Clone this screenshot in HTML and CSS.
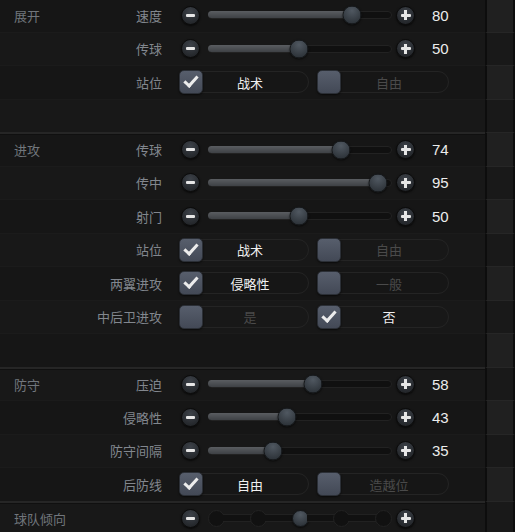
FILE: index.html
```html
<!doctype html>
<html lang="zh">
  <head>
    <meta charset="UTF-8" />
    <title>战术设置</title>
    <link rel="stylesheet" href="styles.css">
  </head>
  <body>
    <div class="panel">
      <!-- 展开 -->
      <div class="row">
        <div class="main">
          <div class="lab"><span class="sec">展开</span><span class="sub">速度</span></div>
          <span class="btn minus"></span>
          <div class="track"><div class="fill" style="width:142.8px"></div><div class="thumb" style="left:142.8px"></div></div>
          <span class="btn plus"></span>
          <span class="val">80</span>
        </div>
        <div class="side"></div>
      </div>
      <div class="row">
        <div class="main">
          <div class="lab"><span class="sub">传球</span></div>
          <span class="btn minus"></span>
          <div class="track"><div class="fill" style="width:90px"></div><div class="thumb" style="left:90px"></div></div>
          <span class="btn plus"></span>
          <span class="val">50</span>
        </div>
        <div class="side"></div>
      </div>
      <div class="row">
        <div class="main">
          <div class="lab"><span class="sub">站位</span></div>
          <div class="opts">
            <div class="opt on"><span class="box"></span><span class="pill">战术</span></div>
            <div class="opt"><span class="box"></span><span class="pill">自由</span></div>
          </div>
        </div>
        <div class="side"></div>
      </div>
      <div class="row">
        <div class="main"></div>
        <div class="side"></div>
      </div>

      <!-- 进攻 -->
      <div class="row first">
        <div class="main">
          <div class="lab"><span class="sec">进攻</span><span class="sub">传球</span></div>
          <span class="btn minus"></span>
          <div class="track"><div class="fill" style="width:132.2px"></div><div class="thumb" style="left:132.2px"></div></div>
          <span class="btn plus"></span>
          <span class="val">74</span>
        </div>
        <div class="side"></div>
      </div>
      <div class="row">
        <div class="main">
          <div class="lab"><span class="sub">传中</span></div>
          <span class="btn minus"></span>
          <div class="track"><div class="fill" style="width:169.2px"></div><div class="thumb" style="left:169.2px"></div></div>
          <span class="btn plus"></span>
          <span class="val">95</span>
        </div>
        <div class="side"></div>
      </div>
      <div class="row">
        <div class="main">
          <div class="lab"><span class="sub">射门</span></div>
          <span class="btn minus"></span>
          <div class="track"><div class="fill" style="width:90px"></div><div class="thumb" style="left:90px"></div></div>
          <span class="btn plus"></span>
          <span class="val">50</span>
        </div>
        <div class="side"></div>
      </div>
      <div class="row">
        <div class="main">
          <div class="lab"><span class="sub">站位</span></div>
          <div class="opts">
            <div class="opt on"><span class="box"></span><span class="pill">战术</span></div>
            <div class="opt"><span class="box"></span><span class="pill">自由</span></div>
          </div>
        </div>
        <div class="side"></div>
      </div>
      <div class="row">
        <div class="main">
          <div class="lab"><span class="sub">两翼进攻</span></div>
          <div class="opts">
            <div class="opt on"><span class="box"></span><span class="pill">侵略性</span></div>
            <div class="opt"><span class="box"></span><span class="pill">一般</span></div>
          </div>
        </div>
        <div class="side"></div>
      </div>
      <div class="row">
        <div class="main">
          <div class="lab"><span class="sub">中后卫进攻</span></div>
          <div class="opts">
            <div class="opt"><span class="box"></span><span class="pill">是</span></div>
            <div class="opt on"><span class="box"></span><span class="pill">否</span></div>
          </div>
        </div>
        <div class="side"></div>
      </div>
      <div class="row">
        <div class="main"></div>
        <div class="side"></div>
      </div>

      <!-- 防守 -->
      <div class="row first">
        <div class="main">
          <div class="lab"><span class="sec">防守</span><span class="sub">压迫</span></div>
          <span class="btn minus"></span>
          <div class="track"><div class="fill" style="width:104.1px"></div><div class="thumb" style="left:104.1px"></div></div>
          <span class="btn plus"></span>
          <span class="val">58</span>
        </div>
        <div class="side"></div>
      </div>
      <div class="row">
        <div class="main">
          <div class="lab"><span class="sub">侵略性</span></div>
          <span class="btn minus"></span>
          <div class="track"><div class="fill" style="width:77.7px"></div><div class="thumb" style="left:77.7px"></div></div>
          <span class="btn plus"></span>
          <span class="val">43</span>
        </div>
        <div class="side"></div>
      </div>
      <div class="row">
        <div class="main">
          <div class="lab"><span class="sub">防守间隔</span></div>
          <span class="btn minus"></span>
          <div class="track"><div class="fill" style="width:63.6px"></div><div class="thumb" style="left:63.6px"></div></div>
          <span class="btn plus"></span>
          <span class="val">35</span>
        </div>
        <div class="side"></div>
      </div>
      <div class="row">
        <div class="main">
          <div class="lab"><span class="sub">后防线</span></div>
          <div class="opts">
            <div class="opt on"><span class="box"></span><span class="pill">自由</span></div>
            <div class="opt"><span class="box"></span><span class="pill">造越位</span></div>
          </div>
        </div>
        <div class="side"></div>
      </div>

      <!-- 球队倾向 -->
      <div class="row first">
        <div class="main">
          <div class="lab"><span class="sec">球队倾向</span></div>
          <span class="btn minus"></span>
          <div class="steps">
            <span class="dot"></span><span class="link"></span>
            <span class="dot"></span><span class="link"></span>
            <span class="dot cur"></span><span class="link"></span>
            <span class="dot"></span><span class="link"></span>
            <span class="dot"></span>
          </div>
          <span class="btn plus"></span>
        </div>
        <div class="side"></div>
      </div>
    </div>
  </body>
</html>
```

FILE: styles.css
```css
/* Tactics panel */
body {
  margin: 0;
  background: #171717;
  font-family: "Liberation Sans", "Noto Sans CJK SC", sans-serif;
  overflow: hidden;
}

.panel {
  margin-top: -2px;
  width: 515px;
}

.row {
  display: flex;
  height: 33.5px;
}

.row:nth-child(odd) .main {
  background: #161616;
}

.row:nth-child(even) .main {
  background: #181818;
}

.main {
  width: 485px;
  display: flex;
  align-items: center;
  box-sizing: border-box;
  border-top: 1px solid #1b1b1b;
}

.row.first .main {
  border-top: 2px solid #262626;
  box-shadow: inset 0 1px 0 #101010;
}

.side {
  width: 26px;
  border-left: 2px solid #0d0d0d;
  border-right: 2px solid #0d0d0d;
  border-top: 1px solid #262626;
  box-sizing: content-box;
}

.row:nth-child(odd) .side {
  background: #202020;
}

.row:nth-child(even) .side {
  background: #191919;
}

/* labels */
.lab {
  width: 162px;
  box-sizing: border-box;
  padding-left: 14px;
  display: flex;
  justify-content: space-between;
  align-items: center;
  font-size: 13px;
  flex-shrink: 0;
}

.sec {
  color: #71767c;
}

.sub {
  margin-left: auto;
  color: #82878e;
}

/* round +/- buttons */
.btn {
  width: 19px;
  height: 19px;
  border-radius: 50%;
  box-sizing: border-box;
  background: radial-gradient(circle at 50% 30%, #3d4249, #24272b 75%);
  border: 1px solid #0b0b0b;
  box-shadow: 0 1px 2px rgba(0, 0, 0, 0.7);
  display: flex;
  align-items: center;
  justify-content: center;
  flex-shrink: 0;
}

.btn.minus {
  margin-left: 19px;
}

.btn.plus {
  margin-left: 4px;
}

.btn::before {
  content: "";
  width: 9px;
  height: 3px;
  border-radius: 1px;
  background: #e6e6e6;
}

.btn.plus {
  background:
    linear-gradient(#e6e6e6, #e6e6e6) center / 3px 10px no-repeat,
    radial-gradient(circle at 50% 30%, #3d4249, #24272b 75%);
}

.btn.plus::before {
  width: 10px;
}

/* slider */
.track {
  position: relative;
  margin-left: 8px;
  width: 184px;
  height: 8px;
  box-sizing: border-box;
  border-radius: 4px;
  background: #101010;
  border: 1px solid #222;
  flex-shrink: 0;
}

.fill {
  height: 100%;
  border-radius: 4px 0 0 4px;
  background: linear-gradient(#5a5d61, #3e4145);
  margin-top: -1px;
  padding-top: 1px;
  margin-left: -1px;
}

.thumb {
  position: absolute;
  top: 50%;
  width: 17px;
  height: 17px;
  border-radius: 50%;
  transform: translate(-50%, -50%);
  background: radial-gradient(circle at 50% 25%, #505861, #2e343a 80%);
  border: 1px solid #16191c;
  box-shadow: 0 1px 2px rgba(0, 0, 0, 0.6);
}

.val {
  margin-left: 17px;
  color: #ececec;
  font-size: 15px;
}

/* check options */
.opts {
  display: flex;
  gap: 8px;
  margin-left: 17px;
}

.opt {
  display: grid;
  grid-template-columns: 12px 12px 1fr;
  align-items: center;
  width: 130px;
  height: 25px;
}

.opt + .opt {
  width: 132px;
}

.box {
  grid-row: 1;
  grid-column: 1 / 3;
  z-index: 1;
  width: 24px;
  height: 24px;
  box-sizing: border-box;
  border-radius: 5px;
  background: linear-gradient(#575e6c, #434956);
  border: 1px solid #2b2f36;
  box-shadow: 0 1px 2px rgba(0, 0, 0, 0.6);
  display: flex;
  align-items: center;
  justify-content: center;
}

.opt.on .box::before {
  content: "";
  width: 11px;
  height: 5px;
  border-left: 3px solid #ececec;
  border-bottom: 3px solid #ececec;
  transform: translate(0, -2px) rotate(-48deg);
}

.pill {
  grid-row: 1;
  grid-column: 2 / 4;
  height: 22px;
  box-sizing: border-box;
  border: 1px solid #242424;
  border-radius: 11px;
  display: flex;
  align-items: center;
  justify-content: center;
  font-size: 13px;
  color: #4a4a4a;
}

.opt.on .pill {
  color: #f0f0f0;
}

/* 5 step slider */
.steps {
  margin-left: 8px;
  width: 184px;
  display: flex;
  align-items: center;
  flex-shrink: 0;
}

.dot {
  width: 17px;
  height: 17px;
  box-sizing: border-box;
  border-radius: 50%;
  background: #111;
  border: 1px solid #222;
  flex-shrink: 0;
}

.dot.cur {
  background: radial-gradient(circle at 50% 25%, #505861, #2e343a 80%);
  border-color: #16191c;
  box-shadow: 0 1px 2px rgba(0, 0, 0, 0.6);
}

.link {
  flex: 1;
  height: 6px;
  margin: 0 -2px;
  background: #111;
  border-top: 1px solid #212121;
  border-bottom: 1px solid #212121;
}
```
